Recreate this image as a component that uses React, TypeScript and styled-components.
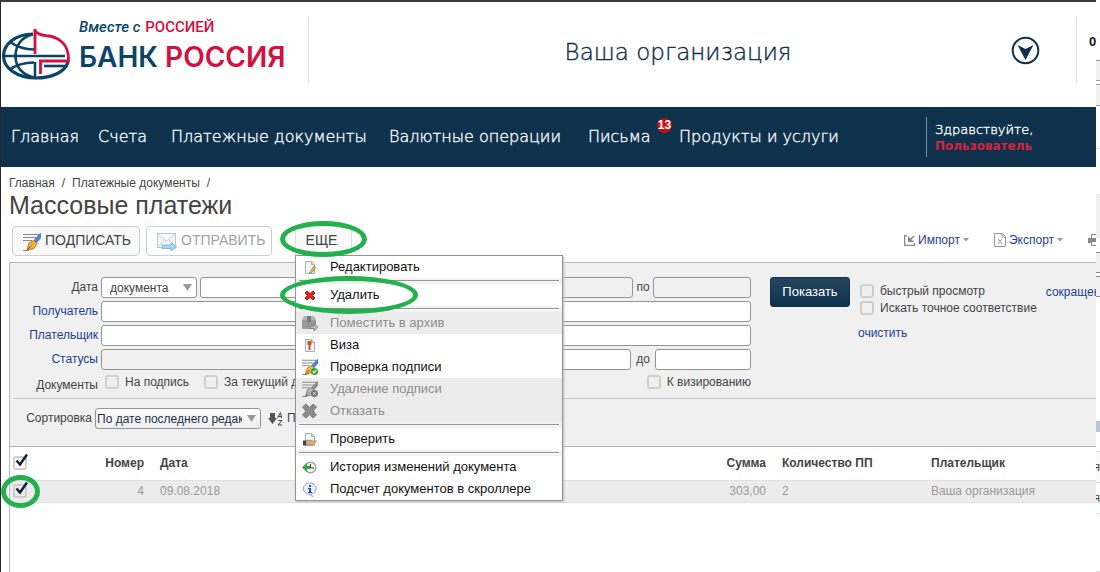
import React from "react";
import styled, { createGlobalStyle, css } from "styled-components";

const navy = "#0e314c";
const link = "#1c3f94";
const red = "#d5103f";
const gothic = `"DejaVu Sans", sans-serif`;

const Global = createGlobalStyle`
  *, *::before, *::after { box-sizing: border-box; }
  html, body { margin: 0; background: #fff; }
  body { font: 12px/16px "Liberation Sans", Arial, sans-serif; color: #444; }
  button, input, select { font: inherit; color: inherit; margin: 0; }
  a { color: inherit; text-decoration: none; }
  #root { overflow: hidden; }
`;

const Screen = styled.div`
  display: flex;
  height: 100vh;
  overflow: hidden;
`;
const Page = styled.div`
  flex: 1;
  min-width: 0;
  display: flex;
  flex-direction: column;
  overflow: hidden;
  border-top: 2px solid #3d3b3d;
  border-left: 1px solid #262430;
`;
const Edge = styled.aside`
  flex: none;
  width: 4px;
  display: flex;
  flex-direction: column;
  background: #fff;
`;
const EdgeCell = styled.div<{ $h: number; $fill?: string; $line?: string }>`
  flex: none;
  height: ${(p) => p.$h}px;
  background: ${(p) => p.$fill || "#fff"};
  border-bottom: 1px solid ${(p) => p.$line || "transparent"};
  overflow: hidden;
  direction: rtl;
  line-height: 30px;
`;

const Header = styled.header`
  flex: none;
  display: flex;
  height: 105px;
  padding-top: 15px;
  align-items: flex-start;
`;
const Brand = styled.a`
  flex: none;
  display: flex;
  width: 308px;
  height: 66px;
  border-right: 1px solid #ddd;
`;
const BrandText = styled.span`
  display: flex;
  flex-direction: column;
  padding-left: 8px;
`;
const Slogan = styled.span`
  display: flex;
  align-items: baseline;
  gap: 5px;
  font: 500 15px/20px Roboto, sans-serif;
  color: ${red};
  white-space: nowrap;
  i { color: #0a4468; font: italic 500 15px/20px Roboto, sans-serif; }
`;
const BankName = styled.span`
  font: 600 28px/40px Inter, sans-serif;
  color: #0a4468;
  white-space: nowrap;
  b { color: ${red}; font-weight: 600; }
`;
const Organisation = styled.div`
  flex: 1;
  display: flex;
  align-items: center;
  height: 66px;
  border-right: 1px solid #ddd;
  padding-right: 36px;
`;
const OrgName = styled.h1`
  flex: 1;
  margin: 0;
  padding: 3px 0 0 36px;
  text-align: center;
  font: 200 23px/32px ${gothic};
  -webkit-text-stroke: 0.4px;
  color: ${navy};
`;
const RoundButton = styled.button`
  border: 0;
  padding: 0;
  background: none;
  width: 29px;
  height: 29px;
  svg { display: block; }
`;
const Account = styled.div`
  width: 19px;
  overflow: hidden;
  padding: 17px 0 0 12px;
  color: #111;
  font-weight: 700;
  font-size: 13px;
  white-space: nowrap;
`;

const Nav = styled.nav`
  flex: none;
  display: flex;
  align-items: center;
  height: 60px;
  background: ${navy};
  color: #f2f5f7;
  font: 200 16px/24px ${gothic};
  -webkit-text-stroke: 0.4px;
  padding: 0 16px 0 10px;
`;
const NavLink = styled.a<{ $w: number }>`
  position: relative;
  width: ${(p) => p.$w}px;
  white-space: nowrap;
`;
const Badge = styled.span`
  position: absolute;
  top: -7px;
  left: 69px;
  width: 15px;
  height: 15px;
  border-radius: 8px;
  background: #c90d12;
  color: #fff;
  text-align: center;
  font: 700 12px/15px "Liberation Sans", Arial, sans-serif;
  -webkit-text-stroke: 0;
`;
const Greeting = styled.div`
  margin-left: auto;
  width: 154px;
  height: 40px;
  border-left: 1px solid #7d8f9d;
  padding: 4px 0 0 8px;
  font-size: 13px;
  line-height: 17px;
  b { display: block; color: #d3243f; font-weight: 700; font-size: 12px; -webkit-text-stroke: 0; }
`;

const Crumbs = styled.nav`
  display: flex;
  gap: 7px;
  padding: 8px 0 0 8px;
`;
const Title = styled.h2`
  margin: 0;
  padding-left: 8px;
  font: 400 25px/28px "Liberation Sans", Arial, sans-serif;
`;
const Toolbar = styled.div`
  display: flex;
  gap: 6px;
  height: 36px;
  margin: 7px 0 0 11px;
  white-space: nowrap;
`;
const ToolButton = styled.button<{ $w: number }>`
  display: flex;
  align-items: center;
  gap: 4px;
  width: ${(p) => p.$w}px;
  height: 30px;
  padding: 0 0 3px 10px;
  border: 1px solid #c9cfd3;
  border-radius: 4px;
  background: #f8f8f9;
  font-size: 14px;
  color: #444;
  &:disabled { color: #a3a3a3; background: #fff; }
  svg { flex: none; position: relative; top: 2px; }
`;
const MoreWrap = styled.div`
  position: relative;
  margin-left: 17px;
  z-index: 2;
`;
const MoreButton = styled.button`
  width: 57px;
  height: 30px;
  padding: 0 4px 2px 0;
  border: 1px solid #dcdfe1;
  border-bottom: 0;
  border-top: 0;
  background: #f9f9f9;
  font-size: 14px;
  color: #444;
`;
const Menu = styled.ul`
  position: absolute;
  top: 29px;
  left: 0;
  width: 268px;
  margin: 0;
  padding: 0;
  list-style: none;
  border: 1px solid #949494;
  background: #fff;
  box-shadow: 1px 1px 2px #bbb;
`;
const MenuRow = styled.li`
  position: relative;
`;
const MenuItem = styled.button`
  display: flex;
  align-items: center;
  width: 100%;
  height: 22px;
  padding: 0 0 0 6px;
  border: 0;
  background: transparent;
  font-size: 13px;
  color: #111;
  text-align: left;
  svg { flex: none; margin-right: 12px; }
  &:disabled { background: #ececec; color: #8d8d8d; }
`;
const MenuRule = styled.li`
  height: 6px;
  background: #f2f2f2;
  padding: 2px 3px;
  &::before { content: ""; display: block; height: 2px; background: #949494; border-bottom: 1px solid #fff; }
`;
const Ring = styled.span<{ $x: number; $y: number; $w: number; $h: number }>`
  position: absolute;
  z-index: 3;
  left: ${(p) => p.$x}px;
  top: ${(p) => p.$y}px;
  width: ${(p) => p.$w}px;
  height: ${(p) => p.$h}px;
  border: 5px solid #22b14c;
  border-radius: 50%;
  pointer-events: none;
`;
const Exchange = styled.div`
  display: flex;
  gap: 25px;
  align-items: flex-start;
  margin-left: auto;
  padding-top: 5px;
  height: 30px;
  width: 192px;
  overflow: hidden;
`;
const ExchangeLink = styled.a`
  flex: none;
  display: flex;
  align-items: center;
  gap: 3px;
  height: 18px;
  color: ${link};
`;

const Panel = styled.section`
  flex: 1;
  margin-left: 8px;
  border-left: 1px solid #b9b9b9;
`;
const Filters = styled.form`
  background: #f0f0f0;
  border: solid #b5b5b5;
  border-width: 1px 0;
  height: 185px;
  padding-left: 4px;
`;
const FilterTop = styled.div`
  display: flex;
  height: 136px;
  padding-top: 14px;
  border-bottom: 1px solid #c6c6c6;
  white-space: nowrap;
`;
const Fields = styled.div`
  flex: none;
  width: 737px;
`;
const Row = styled.div`
  display: flex;
  align-items: flex-start;
  height: 24px;
`;
const Label = styled.label<{ $link?: boolean }>`
  flex: none;
  width: 84px;
  margin-right: 3px;
  line-height: 21px;
  text-align: right;
  ${(p) => p.$link && css`color: ${link};`}
`;
const Between = styled.label<{ $w: number }>`
  flex: none;
  width: ${(p) => p.$w}px;
  text-align: center;
  line-height: 21px;
`;
const TextBox = styled.input<{ $w?: number; $gap?: number }>`
  ${(p) => (p.$w ? `flex: none; width: ${p.$w}px;` : "flex: 1;")}
  margin-left: ${(p) => p.$gap || 0}px;
  min-width: 0;
  height: 21px;
  border: 1px solid #949494;
  border-radius: 3px;
  background: #fff;
  padding: 0 4px;
  &:disabled { background: #f0f0f0; }
`;
const SelectWrap = styled.span<{ $w: number }>`
  position: relative;
  flex: none;
  width: ${(p) => p.$w}px;
  height: 21px;
  svg { position: absolute; right: 5px; top: 7px; pointer-events: none; }
`;
const Select = styled.select<{ $pad: number; $shade?: boolean }>`
  appearance: none;
  display: block;
  width: 100%;
  height: 21px;
  padding: 0 18px 0 ${(p) => p.$pad}px;
  border: 1px solid #949494;
  border-radius: 3px;
  background: ${(p) => (p.$shade ? "linear-gradient(#fff, #ececec)" : "#fff")};
  color: ${(p) => (p.$shade ? "#1c3048" : "#444")};
`;
const CheckLabel = styled.label<{ $w?: number; $end?: boolean }>`
  display: flex;
  align-items: center;
  gap: 6px;
  height: 17px;
  ${(p) => p.$w && `width: ${p.$w}px;`}
  ${(p) => p.$end && "margin-left: auto;"}
`;
const CheckBox = styled.input`
  appearance: none;
  flex: none;
  width: 14px;
  height: 14px;
  border: 2px solid #cfcfcf;
  border-radius: 3px;
  background: transparent;
  display: block;
`;
const CheckRow = styled(Row)`
  ${Label} { margin-right: 7px; line-height: 24px; }
`;
const ShowButton = styled.button`
  flex: none;
  width: 80px;
  height: 30px;
  margin-left: 19px;
  border: 1px solid ${navy};
  border-radius: 3px;
  background: linear-gradient(#26465f, ${navy});
  color: #fff;
  font-size: 13px;
`;
const Options = styled.div`
  flex: none;
  padding: 5px 0 0 10px;
`;
const ClearLink = styled.a`
  display: block;
  margin: 9px 0 0 -2px;
  color: ${link};
`;
const ShortLink = styled.a`
  margin-left: 9px;
  padding-top: 7px;
  color: ${link};
`;
const SortRow = styled.div`
  display: flex;
  padding-top: 9px;
  line-height: 21px;
  white-space: nowrap;
  label { width: 81px; padding-right: 3px; text-align: right; }
`;
const SortButton = styled.button`
  display: flex;
  align-items: center;
  gap: 4px;
  height: 21px;
  padding: 0;
  margin-left: 7px;
  border: 0;
  background: none;
`;

const Table = styled.table`
  width: 100%;
  table-layout: fixed;
  border-collapse: collapse;
  th, td { padding: 0 8px; text-align: left; white-space: nowrap; }
  th { height: 33px; font-weight: 700; color: #444; }
  td { height: 22px; color: #999; background: #ececec; border: solid #e0e0e0; border-width: 1px 0; }
`;
const Col = styled.col<{ $w?: number }>`
  ${(p) => p.$w && `width: ${p.$w}px;`}
`;
const Cell = styled.td<{ $right?: boolean }>`
  && { ${(p) => p.$right && "text-align: right;"} }
`;
const TickWrap = styled.span`
  position: relative;
  display: block;
  width: 14px;
  margin-left: -5px;
  > svg { position: absolute; left: 2px; top: -3px; pointer-events: none; }
`;

const Arrow = () => (
  <svg width="9" height="7" viewBox="0 0 9 7"><path d="M0 0h9L4.500 7z" fill="#999" /></svg>
);
const SmallArrow = () => (
  <svg width="6" height="4" viewBox="0 0 6 4"><path d="M0 0h6L3 3.500z" fill="#999" /></svg>
);

const Logo = () => (
  <svg width="70" height="66" viewBox="0 0 70 66" fill="none">
    <g stroke="#0a4468" strokeWidth="2.600">
      <path d="M32 17C14 17.500 2.500 27 2.500 39c0 12.500 14 22 32.500 22 16 0 29-6 32-16" strokeWidth="3.200" />
      <path d="M32 17.500C20 20 14.500 29 14.500 39c0 11 7 19 20.500 22" />
      <path d="M2 39h62" />
      <path d="M9 25c7 5 14 7.500 24 7.500" /><path d="M8 53c7-5 14-7.500 25-7.500" />
      <path d="M34 45v16" /><path d="M43 49h24" />
    </g>
    <path d="M34 37V12M33 13c6 6 9 5 15 6 11 2 19.500 9 19.500 23v2H39.500v13" stroke={red} strokeWidth="2.800" />
  </svg>
);

const Pen = ({ grey, size = 18, mark }: { grey?: boolean; size?: number; mark?: "ok" | "x" }) => (
  <svg width={size} height={size} viewBox="0 0 18 18">
    <path d="M0 1.500h16M0 4.500h13M0 7.500h9M0 17.500h6" stroke="#8a8a8a" strokeWidth="1.200" />
    <path d="M10 8l6-7 2-1v5l-5 6z" fill={grey ? "#8c8c8c" : "#4b86cf"} />
    <path d="M4 17l2-7 5-2.500 3 3-3 5z" fill={grey ? "#bcbcbc" : "#f2b43c"} stroke={grey ? "#777" : "#b67a1c"} />
    <path d="M4 17l4.500-4.500" stroke={grey ? "#777" : "#8a5a10"} />
    {mark === "ok" && <><circle cx="14" cy="14" r="4" fill="#37a63c" /><path d="M12 14l1.500 1.500L16 12.500" stroke="#fff" fill="none" strokeWidth="1.300" /></>}
    {mark === "x" && <><circle cx="14" cy="14" r="4" fill="#777" /><path d="M12.500 12.500l3 3m0-3l-3 3" stroke="#eee" /></>}
  </svg>
);
const Mail = () => (
  <svg width="20" height="18" viewBox="0 0 20 18" fill="none">
    <path d="M.5.500h18v14H.5z" fill="#f7f9fa" stroke="#b9c7cf" />
    <path d="M.5.500l9 8 9-8M.5 14.500L7 7m11.500 7.500L12 7" stroke="#bccdd6" />
    <path d="M5 12h9V9.500l5.500 4.500-5.500 4v-2.500H5z" fill="#a9d4f3" stroke="#7db9e4" />
  </svg>
);
const Cross = ({ grey }: { grey?: boolean }) => (
  <svg width="16" height="16" viewBox="0 0 16 16">
    {grey
      ? <path d="M4 1l3.500 3.500L11 1l3.500 3L11 8l3.500 4-3.500 3-3.500-3.500L4 15 .5 12 4 8 .5 4z" fill="#8b8b8b" stroke="#7b7b7b" strokeLinejoin="round" />
      : <path d="M5 4l3 2.500L11 4l2 2-2.500 2.500L13 11l-2 2-3-2.500L5 13l-2-2 2.500-2.500L3 6z" fill="#d22" stroke="#a81818" strokeLinejoin="round" />}
  </svg>
);
const Sheet = ({ children }: { children?: React.ReactNode }) => (
  <svg width="16" height="16" viewBox="0 0 16 16" fill="none">
    <path d="M3.500 2.500h6l3 3v9h-9z" fill="#f1f6f6" stroke="#9fb2b2" />
    <path d="M9.500 2.500v3h3" stroke="#9fb2b2" />
    {children}
  </svg>
);
const Box = () => (
  <svg width="16" height="16" viewBox="0 0 16 16">
    <path d="M2 1h10l2 4v9H0V5z" fill="#b4b4b4" /><path d="M0 5h14v9H0z" fill="#999" />
    <path d="M5 1h4v6H5z" fill="#777" /><path d="M8 11h4V8.500l4 3.800-4 3.700v-2.500H8z" fill="#bbb" stroke="#777" strokeWidth=".8" />
  </svg>
);
const History = () => (
  <svg width="16" height="16" viewBox="0 0 16 16" fill="none">
    <circle cx="8.500" cy="8.500" r="5.300" fill="#f1f3f1" stroke="#9aa59a" strokeWidth="1.500" />
    <path d="M8.500 5v4h3.500" stroke="#333" /><path d="M0 8.500L5 4v3h3v3H5v3z" fill="#35a845" />
  </svg>
);
const Info = () => (
  <svg width="16" height="16" viewBox="0 0 16 16">
    <path d="M7.500 2a6 5.500 0 1 1 1.500 11l2 3-4-3A6 5.500 0 0 1 7.500 2z" fill="#e9ecfb" stroke="#9aa2cc" />
    <path d="M7 4h2v2H7zM6 7h3v4h1v1H6v-1h1V8H6z" fill="#1a56c4" />
  </svg>
);
const Check = () => (
  <svg width="14" height="14" viewBox="0 0 14 14" fill="none">
    <path d="M1.500 7.500L5 11.500 12 1.500" stroke="#0f2138" strokeWidth="2.400" />
  </svg>
);

type Entry = { text: string; icon: React.ReactNode; off?: boolean; ring?: boolean } | null;
const entries: Entry[] = [
  { text: "Редактировать", icon: <Sheet><path d="M8 13l4-6 2 1.500-4 5-3 .5z" fill="#dcb648" stroke="#927226" strokeWidth=".6" /></Sheet> },
  null,
  { text: "Удалить", icon: <Cross />, ring: true },
  null,
  { text: "Поместить в архив", icon: <Box />, off: true },
  { text: "Виза", icon: <Sheet><path d="M5.500 4h4v4h-1v5h-2V8h-1z" fill="#d2521d" /></Sheet> },
  { text: "Проверка подписи", icon: <Pen size={16} mark="ok" /> },
  { text: "Удаление подписи", icon: <Pen size={16} grey mark="x" />, off: true },
  { text: "Отказать", icon: <Cross grey />, off: true },
  null,
  { text: "Проверить", icon: <Sheet><path d="M4 9.500c3-1 5 0 7 .5 2-.5 4-.5 3 1-1 2-4 3-7 3H4z" fill="#e3a873" stroke="#a8703f" strokeWidth=".6" /><path d="M1 9.500h3v5H1z" fill="#35437c" /></Sheet> },
  null,
  { text: "История изменений документа", icon: <History /> },
  { text: "Подсчет документов в скроллере", icon: <Info /> },
];

const edge: [number, string?, string?, string?][] = [
  [61, "#fff", "#999"], [20, "#f0f0f0", "#999"], [4, "#fff", "#999"], [21, "#f0f0f0", "#999"],
  [43, "#fff", "#ddd"], [45, "#fff"], [44, "#f0f0f0"], [15, "#fff", "#888"], [20, "#f0f0f0", "#888"],
  [4, "#fff", "#888"], [20, "#f0f0f0", "#888"], [124, "#fff"], [11, "#b8c6d8"], [20, "#fff", "#ddd"],
  [31, "#fafafa", "#ddd", "я"], [31, "#fff", "#ddd", "я"], [58, "#fff", "#ddd"],
];

export default function App() {
  return (
    <Screen>
      <Global />
      <Page>
        <Header>
          <Brand href="#">
            <Logo />
            <BrandText>
              <Slogan><i>Вместе с</i> РОССИЕЙ</Slogan>
              <BankName>БАНК <b>РОССИЯ</b></BankName>
            </BrandText>
          </Brand>
          <Organisation>
            <OrgName>Ваша организация</OrgName>
            <RoundButton aria-label="Выбрать организацию">
              <svg width="29" height="29" viewBox="0 0 29 29">
                <circle cx="14.500" cy="14.500" r="12.800" fill="none" stroke={navy} strokeWidth="2" />
                <path d="M6.500 9l8 4 8-4-8 15z" fill={navy} />
              </svg>
            </RoundButton>
          </Organisation>
          <Account>0</Account>
        </Header>
        <Nav>
          <NavLink href="#" $w={87}>Главная</NavLink>
          <NavLink href="#" $w={73}>Счета</NavLink>
          <NavLink href="#" $w={218}>Платежные документы</NavLink>
          <NavLink href="#" $w={199}>Валютные операции</NavLink>
          <NavLink href="#" $w={91}>Письма<Badge>13</Badge></NavLink>
          <NavLink href="#" $w={160}>Продукты и услуги</NavLink>
          <Greeting>Здравствуйте,<b>Пользователь</b></Greeting>
        </Nav>
        <Crumbs>
          <a href="#">Главная</a><span>/</span><a href="#">Платежные документы</a><span>/</span>
        </Crumbs>
        <Title>Массовые платежи</Title>
        <Toolbar>
          <ToolButton $w={128}><Pen />ПОДПИСАТЬ</ToolButton>
          <ToolButton $w={126} disabled><Mail />ОТПРАВИТЬ</ToolButton>
          <MoreWrap>
            <MoreButton>ЕЩЕ</MoreButton>
            <Ring $x={-15} $y={-5} $w={87} $h={36} />
            <Menu>
              {entries.map((e, i) =>
                e ? (
                  <MenuRow key={i}>
                    <MenuItem disabled={e.off}>{e.icon}{e.text}</MenuItem>
                    {e.ring && <Ring $x={-16} $y={-8} $w={138} $h={38} />}
                  </MenuRow>
                ) : <MenuRule key={i} />
              )}
            </Menu>
          </MoreWrap>
          <Exchange>
            <ExchangeLink href="#">
              <svg width="11" height="11" viewBox="0 0 11 11" fill="none" stroke="#888"><path d="M3 .5H.5v10h10V8M10 1L5 6" strokeWidth="1.500" /><path d="M4 1v6h6z" fill="#888" stroke="none" /></svg>
              Импорт<SmallArrow />
            </ExchangeLink>
            <ExchangeLink href="#">
              <svg width="12" height="14" viewBox="0 0 12 14" fill="none" stroke="#999"><path d="M.5.5h8l3 3v10H.5zM8 .5V4h3.500M4 6l4 5M8 6l-4 5" /></svg>
              Экспорт<SmallArrow />
            </ExchangeLink>
            <ExchangeLink href="#" aria-label="Печать">
              <svg width="14" height="14" viewBox="0 0 14 14"><path d="M0 5h14v5H0z" fill="#888" /><path d="M3.500 1.500h7v4h-7zM3.500 8.500h7v4h-7z" fill="#fff" stroke="#888" /></svg>
            </ExchangeLink>
          </Exchange>
        </Toolbar>
        <Panel>
          <Filters>
            <FilterTop>
              <Fields>
                <Row>
                  <Label htmlFor="kind">Дата</Label>
                  <SelectWrap $w={96}>
                    <Select id="kind" $pad={8}><option>документа</option></Select><Arrow />
                  </SelectWrap>
                  <TextBox $gap={3} aria-label="Вид периода" />
                  <TextBox $gap={3} $w={216} disabled aria-label="Дата с" />
                  <Between $w={20} htmlFor="to">по</Between>
                  <TextBox $w={98} id="to" disabled />
                </Row>
                <Row><Label $link htmlFor="payee">Получатель</Label><TextBox id="payee" /></Row>
                <Row><Label $link htmlFor="payer">Плательщик</Label><TextBox id="payer" /></Row>
                <Row>
                  <Label $link htmlFor="status">Статусы</Label>
                  <TextBox id="status" disabled />
                  <TextBox $gap={60} $w={96} aria-label="Сумма от" />
                  <Between $w={24} htmlFor="max">до</Between>
                  <TextBox $w={96} id="max" />
                </Row>
                <CheckRow>
                  <Label as="span">Документы</Label>
                  <CheckLabel $w={99}><CheckBox type="checkbox" />На подпись</CheckLabel>
                  <CheckLabel><CheckBox type="checkbox" />За текущий день</CheckLabel>
                  <CheckLabel $end><CheckBox type="checkbox" />К визированию</CheckLabel>
                </CheckRow>
              </Fields>
              <ShowButton type="button">Показать</ShowButton>
              <Options>
                <CheckLabel><CheckBox type="checkbox" />быстрый просмотр</CheckLabel>
                <CheckLabel><CheckBox type="checkbox" />Искать точное соответствие</CheckLabel>
                <ClearLink href="#">очистить</ClearLink>
              </Options>
              <ShortLink href="#">сокращенный</ShortLink>
            </FilterTop>
            <SortRow>
              <label htmlFor="sort">Сортировка</label>
              <SelectWrap $w={166}>
                <Select id="sort" $pad={1} $shade><option>По дате последнего редактирования</option></Select><Arrow />
              </SelectWrap>
              <SortButton type="button">
                <svg width="15" height="14" viewBox="0 0 15 14" fill="none">
                  <path d="M2 1h5v5h2l-4.500 6L0 6h2z" fill="#555" />
                  <path d="M9.500 6L12.500.5 13.500 6M10.500 4.500h3M10.500 8.500h3.500l-4 4.500h4" stroke="#444" />
                </svg>
                По
              </SortButton>
            </SortRow>
          </Filters>
          <Table>
            <colgroup><Col $w={50} /><Col $w={92} /><Col /><Col $w={84} /><Col $w={149} /><Col $w={173} /></colgroup>
            <thead>
              <tr>
                <th><TickWrap><CheckBox type="checkbox" defaultChecked aria-label="Выбрать все" /><Check /></TickWrap></th>
                <Cell as="th" $right>Номер</Cell><th>Дата</th><Cell as="th" $right>Сумма</Cell>
                <th>Количество ПП</th><th>Плательщик</th>
              </tr>
            </thead>
            <tbody>
              <tr>
                <td><TickWrap><CheckBox type="checkbox" defaultChecked aria-label="Выбрать документ 4" /><Check /><Ring $x={-12} $y={-9} $w={39} $h={33} /></TickWrap></td>
                <Cell $right>4</Cell><td>09.08.2018</td><Cell $right>303,00</Cell>
                <td>2</td><td>Ваша организация</td>
              </tr>
            </tbody>
          </Table>
        </Panel>
      </Page>
      <Edge>
        {edge.map(([h, fill, line, text], i) => <EdgeCell key={i} $h={h} $fill={fill} $line={line}>{text}</EdgeCell>)}
      </Edge>
    </Screen>
  );
}
